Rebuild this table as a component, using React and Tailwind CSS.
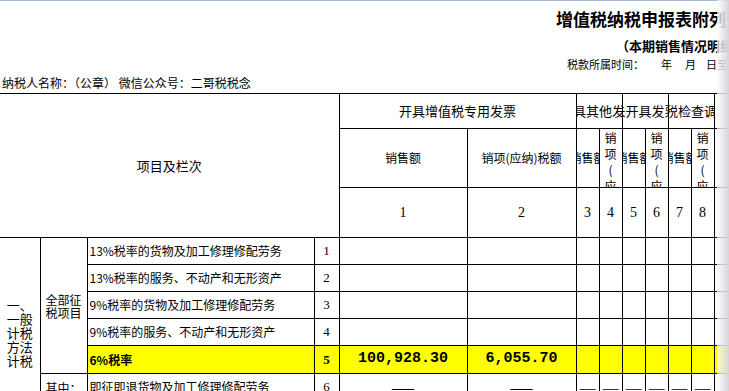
import clsx from 'clsx';

// 增值税纳税申报表附列资料（一） — a spreadsheet view, clipped by the window on the right.
// Columns (left line to left line): 40 / 47 / 227 / 25 / 128 / 109 / 6 x 23 / 合计 x 3.

const rows = [
  { text: '13%税率的货物及加工修理修配劳务', no: '1' },
  { text: '13%税率的服务、不动产和无形资产', no: '2' },
  { text: '9%税率的货物及加工修理修配劳务', no: '3' },
  { text: '9%税率的服务、不动产和无形资产', no: '4' },
  { text: '6%税率', no: '5', hot: true, sales: '100,928.30', tax: '6,055.70' },
];

const jzjt = [
  { text: '即征即退货物及加工修理修配劳务', no: '6' },
  { text: '即征即退服务、不动产和无形资产', no: '7' },
];

const cell = 'border border-black p-0';
const serif = "font-['Liberation_Serif',serif]";

// Excel-style clipping: text stays centred and spills out of both edges.
function Clip({ children, className }) {
  return (
    <div className={clsx('flex justify-center overflow-hidden whitespace-nowrap', className)}>
      <span>{children}</span>
    </div>
  );
}

// Wrapped header in a 23px column — one glyph per line, cut at the row bottom.
function Stack({ children }) {
  return (
    <div className="h-[58px] overflow-hidden px-[5px] pt-[1px] text-center text-[12px] leading-[16px] break-all [line-break:anywhere]">
      {children}
    </div>
  );
}

function Blank({ hot }) {
  return <td className={clsx(cell, hot && 'bg-[#ffff00]')} />;
}

export default function App() {
  return (
    <div className="relative h-[391px] w-[729px] overflow-hidden bg-white font-['Noto_Sans_CJK_SC',sans-serif] text-black">
      <div className="h-[1px] bg-[#a3b7d3]" />

      <div className="h-[35px] whitespace-nowrap pl-[556px] text-[17px] font-bold leading-[35px]">
        增值税纳税申报表附列资料（一）
      </div>
      <div className="h-[20px] whitespace-nowrap pl-[616px] text-[13px] font-bold leading-[20px]">
        （本期销售情况明细）
      </div>
      <div className="flex h-[16px] whitespace-nowrap pl-[567px] text-[11px] leading-[16px]">
        <span>税款所属时间：</span>
        <span className="ml-[17px]">年</span>
        <span className="ml-[13px]">月</span>
        <span className="ml-[10px]">日至</span>
        <span className="ml-[20px]">年</span>
        <span className="ml-[13px]">月</span>
        <span className="ml-[10px]">日</span>
      </div>
      <div className="h-[21px] whitespace-nowrap pl-[2px] text-[12px] leading-[21px]">
        纳税人名称：（公章） 微信公众号：二哥税税念
      </div>

      <table className="w-[924px] table-fixed border-collapse">
        <colgroup>
          <col className="w-[40px]" />
          <col className="w-[47px]" />
          <col className="w-[227px]" />
          <col className="w-[25px]" />
          <col className="w-[128px]" />
          <col className="w-[109px]" />
          <col className="w-[23px]" />
          <col className="w-[23px]" />
          <col className="w-[23px]" />
          <col className="w-[23px]" />
          <col className="w-[23px]" />
          <col className="w-[23px]" />
          <col className="w-[70px]" />
          <col className="w-[70px]" />
          <col className="w-[70px]" />
        </colgroup>
        <thead>
          <tr className="h-[35px]">
            <td colSpan={4} rowSpan={3} className={clsx(cell, 'border-l-0 text-center text-[13px]')}>
              项目及栏次
            </td>
            <td colSpan={2} className={clsx(cell, 'text-center text-[13px]')}>
              开具增值税专用发票
            </td>
            <td colSpan={2} className={cell}>
              <Clip className="text-[13px]">开具其他发票</Clip>
            </td>
            <td colSpan={2} className={cell}>
              <Clip className="text-[13px]">未开具发票</Clip>
            </td>
            <td colSpan={2} className={cell}>
              <Clip className="text-[13px]">纳税检查调整</Clip>
            </td>
            <td colSpan={3} className={clsx(cell, 'text-center text-[13px]')}>
              合计
            </td>
          </tr>
          <tr className="h-[59px]">
            <td className={clsx(cell, 'text-center text-[12px]')}>销售额</td>
            <td className={clsx(cell, 'text-center text-[12px]')}>销项(应纳)税额</td>
            {[0, 1, 2].map(function (i) {
              return [
                <td key={'s' + i} className={cell}>
                  <Clip className="text-[12px]">销售额</Clip>
                </td>,
                <td key={'t' + i} className={clsx(cell, 'align-top')}>
                  <Stack>销项(应纳)税额</Stack>
                </td>,
              ];
            })}
            <td className={clsx(cell, 'text-center text-[12px]')}>销售额</td>
            <td className={clsx(cell, 'text-center text-[12px]')}>销项(应纳)税额</td>
            <td className={clsx(cell, 'text-center text-[12px]')}>价税合计</td>
          </tr>
          <tr className="h-[50px]">
            {['1', '2', '3', '4', '5', '6', '7', '8', '9', '10', '11'].map(function (n) {
              return (
                <td key={n} className={clsx(cell, serif, 'text-center text-[14px]')}>
                  {n}
                </td>
              );
            })}
          </tr>
        </thead>
        <tbody>
          {rows.map(function (r, i) {
            return (
              <tr key={r.no} className={r.hot ? 'h-[28px]' : 'h-[27px]'}>
                {i === 0 && (
                  <td rowSpan={7} className={clsx(cell, 'border-l-0 px-[4px] text-center text-[13px] leading-[14px]')}>
                    一、一般计税方法计税
                  </td>
                )}
                {i === 0 && (
                  <td rowSpan={5} className={clsx(cell, 'px-[4px] text-center text-[12px] leading-[13px]')}>
                    全部征税项目
                  </td>
                )}
                <td
                  className={clsx(
                    cell,
                    'whitespace-nowrap pl-[2px] text-[12px]',
                    r.hot && 'bg-[#ffff00] text-[12.5px] font-bold'
                  )}
                >
                  {r.text}
                </td>
                <td className={clsx(cell, serif, 'text-center text-[13px]', r.hot && 'bg-[#ffff00] font-bold')}>
                  {r.no}
                </td>
                <td
                  className={clsx(
                    cell,
                    "text-center font-['Liberation_Mono',monospace] text-[15px] font-bold",
                    r.hot && 'bg-[#ffff00]'
                  )}
                >
                  {r.sales}
                </td>
                <td
                  className={clsx(
                    cell,
                    "text-center font-['Liberation_Mono',monospace] text-[15px] font-bold",
                    r.hot && 'bg-[#ffff00]'
                  )}
                >
                  {r.tax}
                </td>
                {Array.from({ length: 9 }).map(function (_, k) {
                  return <Blank key={k} hot={r.hot} />;
                })}
              </tr>
            );
          })}
          {jzjt.map(function (r, i) {
            return (
              <tr key={r.no} className="h-[27px]">
                {i === 0 && (
                  <td rowSpan={2} className={clsx(cell, 'px-[4px] text-center text-[12px] leading-[13px]')}>
                    其中：即征即退项目
                  </td>
                )}
                <td className={clsx(cell, 'whitespace-nowrap pl-[2px] text-[12px]')}>{r.text}</td>
                <td className={clsx(cell, serif, 'text-center text-[13px]')}>{r.no}</td>
                <td className={clsx(cell, 'text-center text-[14px]')}>——</td>
                <td className={clsx(cell, 'text-center text-[14px]')}>——</td>
                {Array.from({ length: 6 }).map(function (_, k) {
                  return (
                    <td key={k} className={cell}>
                      <Clip className="text-[10px]">——</Clip>
                    </td>
                  );
                })}
                <td className={cell} />
                <td className={cell} />
                <td className={cell} />
              </tr>
            );
          })}
        </tbody>
      </table>

      {/* window edge shading on the right */}
      <div className="pointer-events-none absolute inset-y-0 right-0 w-[12px] bg-linear-to-r from-white/70 to-[#d3d5d9]" />
    </div>
  );
}
